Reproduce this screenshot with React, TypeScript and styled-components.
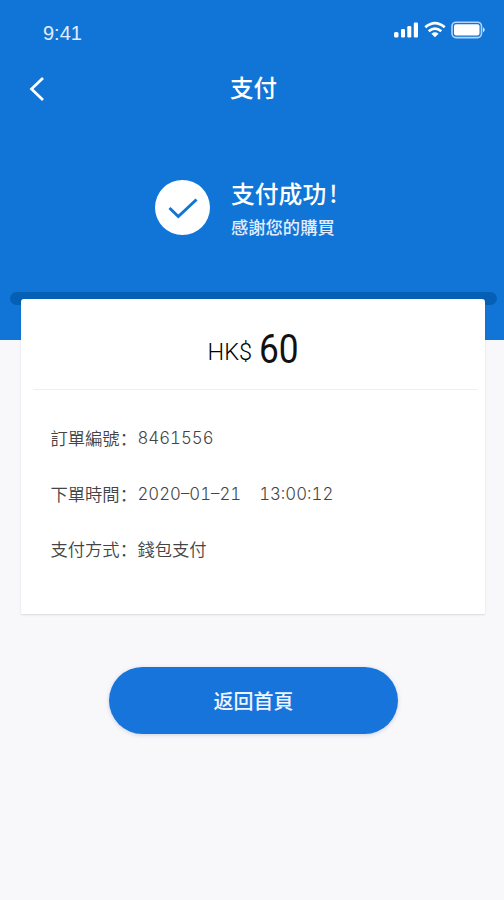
import React from 'react';
import styled, { createGlobalStyle } from 'styled-components';

const GlobalStyle = createGlobalStyle`
  * { box-sizing: border-box; }
  body { margin: 0; background: #f8f8fb; }
`;

const Screen = styled.div`
  width: 504px;
  height: 900px;
  overflow: hidden;
  background: #f8f8fb;
  font-family: 'Noto Sans CJK SC', sans-serif;
  color: #444;
`;

const Hero = styled.header`
  height: 340px;
  background: #1075d6;
  color: #fff;
`;

const StatusBar = styled.div`
  display: flex;
  justify-content: space-between;
  height: 60px;
  padding: 20px 18px 0 43px;
`;

const Clock = styled.span`
  font: 400 20px/26px 'Liberation Sans', sans-serif;
  color: #e3edff;
`;

const StatusIcons = styled.svg`
  width: 94px;
  height: 20px;
`;

const NavBar = styled.nav`
  display: grid;
  grid-template-columns: 60px 1fr 60px;
  align-items: center;
  height: 58px;
`;

const BackButton = styled.button`
  height: 34px;
  padding: 0 0 0 26px;
  border: 0;
  background: none;
  color: inherit;
  text-align: left;
  svg { display: block; }
`;

const Title = styled.h1`
  margin: 0;
  padding: 0 0 5px 3px;
  font-size: 23.5px;
  line-height: 34px;
  font-weight: 500;
  text-align: center;
`;

const Result = styled.section`
  display: flex;
  gap: 21px;
  padding: 57px 0 0 155px;
`;

const CheckBadge = styled.svg`
  width: 55px;
  height: 55px;
  margin-top: 5px;
`;

const ResultTitle = styled.h2`
  margin: 0;
  font-size: 23.8px;
  line-height: 36px;
  font-weight: 500;
`;

const Exclamation = styled.span`
  margin-left: 3px;
`;

const ResultNote = styled.p`
  margin: 2px 0 0;
  font-size: 17.3px;
  line-height: 28px;
  color: #e3edff;
  font-weight: 500;
`;

const Slot = styled.div`
  height: 13px;
  margin: -48px 7px 0 10px;
  border-radius: 7px;
  background: #0560b5;
`;

const Card = styled.main`
  position: relative;
  width: 464px;
  height: 315px;
  margin: -6px 0 0 20.5px;
  border-radius: 3px 3px 1px 1px;
  background: #fff;
  box-shadow: 0 1px 2px rgba(40, 50, 70, 0.15);
`;

const Amount = styled.div`
  display: flex;
  align-items: flex-start;
  height: 91px;
  margin: 0 8px 0 12px;
  padding-left: 175px;
  border-bottom: 1px solid #efeff1;
  font-family: Roboto, sans-serif;
  color: #111;
`;

const Currency = styled.span`
  width: 51px;
  padding-top: 38px;
  font-size: 23.5px;
  line-height: 30px;
  font-weight: 300;
  color: #000;
`;

const Value = styled.span`
  padding-top: 25px;
  font-size: 41.5px;
  line-height: 50px;
  font-weight: 400;
  transform: scaleX(0.85);
  transform-origin: left;
`;

const Details = styled.dl`
  margin: 0;
  padding: 20px 30px 0;
`;

const Row = styled.div`
  display: flex;
  height: 55.5px;
  align-items: center;
  font-size: 17.3px;
  font-weight: 350;
`;

const Label = styled.dt`
  width: 87px;
  white-space: nowrap;
`;

const Data = styled.dd`
  display: flex;
  gap: 18px;
  margin: 0;
`;

const Figures = styled.span`
  padding-top: 1px;
  font-family: Inter, 'Liberation Sans', sans-serif;
  font-size: 16.8px;
  font-weight: 300;
  font-variant-numeric: tabular-nums;
`;

const HomeButton = styled.button`
  display: block;
  width: 289px;
  height: 67px;
  margin: 53px 0 0 109px;
  padding: 1px 0 0;
  border: 0;
  border-radius: 34px;
  background: #1674db;
  color: #edf3ff;
  font: 500 20px/30px 'Noto Sans CJK SC', sans-serif;
  box-shadow: 0 1px 4px rgba(30, 60, 110, 0.2);
`;

export default function App() {
  return (
    <>
      <GlobalStyle />
      <Screen>
        <Hero>
          <StatusBar>
            <Clock>9:41</Clock>
            <StatusIcons viewBox="0 0 94 20" fill="#fff">
              <rect x="2" y="12" width="4.5" height="5.5" rx="1.5" />
              <rect x="9" y="9" width="4" height="8.5" rx="1.2" />
              <rect x="15.3" y="6" width="4" height="11.5" rx="1.2" />
              <rect x="21.8" y="2.5" width="4.2" height="15" rx="1.2" />
              <g fill="none" stroke="#fff" strokeWidth="2.8">
                <path d="M33.3 7.3Q43 -1 52.7 7.3" />
                <path d="M36.7 11.3Q43 6 49.3 11.3" />
              </g>
              <path d="M39.4 13.7Q43 10.8 46.6 13.7L43 17.3Z" />
              <rect x="60" y="2.2" width="29.5" height="15.4" rx="4" fill="none" stroke="#b6d4fb" strokeWidth="1.6" />
              <rect x="62" y="4.2" width="25.5" height="11.4" rx="2" />
              <path d="M91 7.2Q94.5 9.8 91 12.4Z" fill="#d7e6fc" />
            </StatusIcons>
          </StatusBar>
          <NavBar>
            <BackButton aria-label="返回">
              <svg width="22" height="34" viewBox="0 0 22 34" fill="none" stroke="#fff" strokeWidth="2.7">
                <path d="M17 6L5.5 17L17 28" />
              </svg>
            </BackButton>
            <Title>支付</Title>
          </NavBar>
          <Result>
            <CheckBadge viewBox="0 0 55 55">
              <circle cx="27.5" cy="27.5" r="27.5" fill="#fff" />
              <path d="M14.5 28L23.3 36.5L41.5 19.5" fill="none" stroke="#1075d6" strokeWidth="3" />
            </CheckBadge>
            <div>
              <ResultTitle>
                支付成功<Exclamation>!</Exclamation>
              </ResultTitle>
              <ResultNote>感謝您的購買</ResultNote>
            </div>
          </Result>
        </Hero>
        <Slot />
        <Card>
          <Amount>
            <Currency>HK$</Currency>
            <Value>60</Value>
          </Amount>
          <Details>
            <Row>
              <Label>訂單編號：</Label>
              <Data>
                <Figures>8461556</Figures>
              </Data>
            </Row>
            <Row>
              <Label>下單時間：</Label>
              <Data>
                <Figures>2020–01–21</Figures>
                <Figures>13:00:12</Figures>
              </Data>
            </Row>
            <Row>
              <Label>支付方式：</Label>
              <Data>錢包支付</Data>
            </Row>
          </Details>
        </Card>
        <HomeButton>返回首頁</HomeButton>
      </Screen>
    </>
  );
}
